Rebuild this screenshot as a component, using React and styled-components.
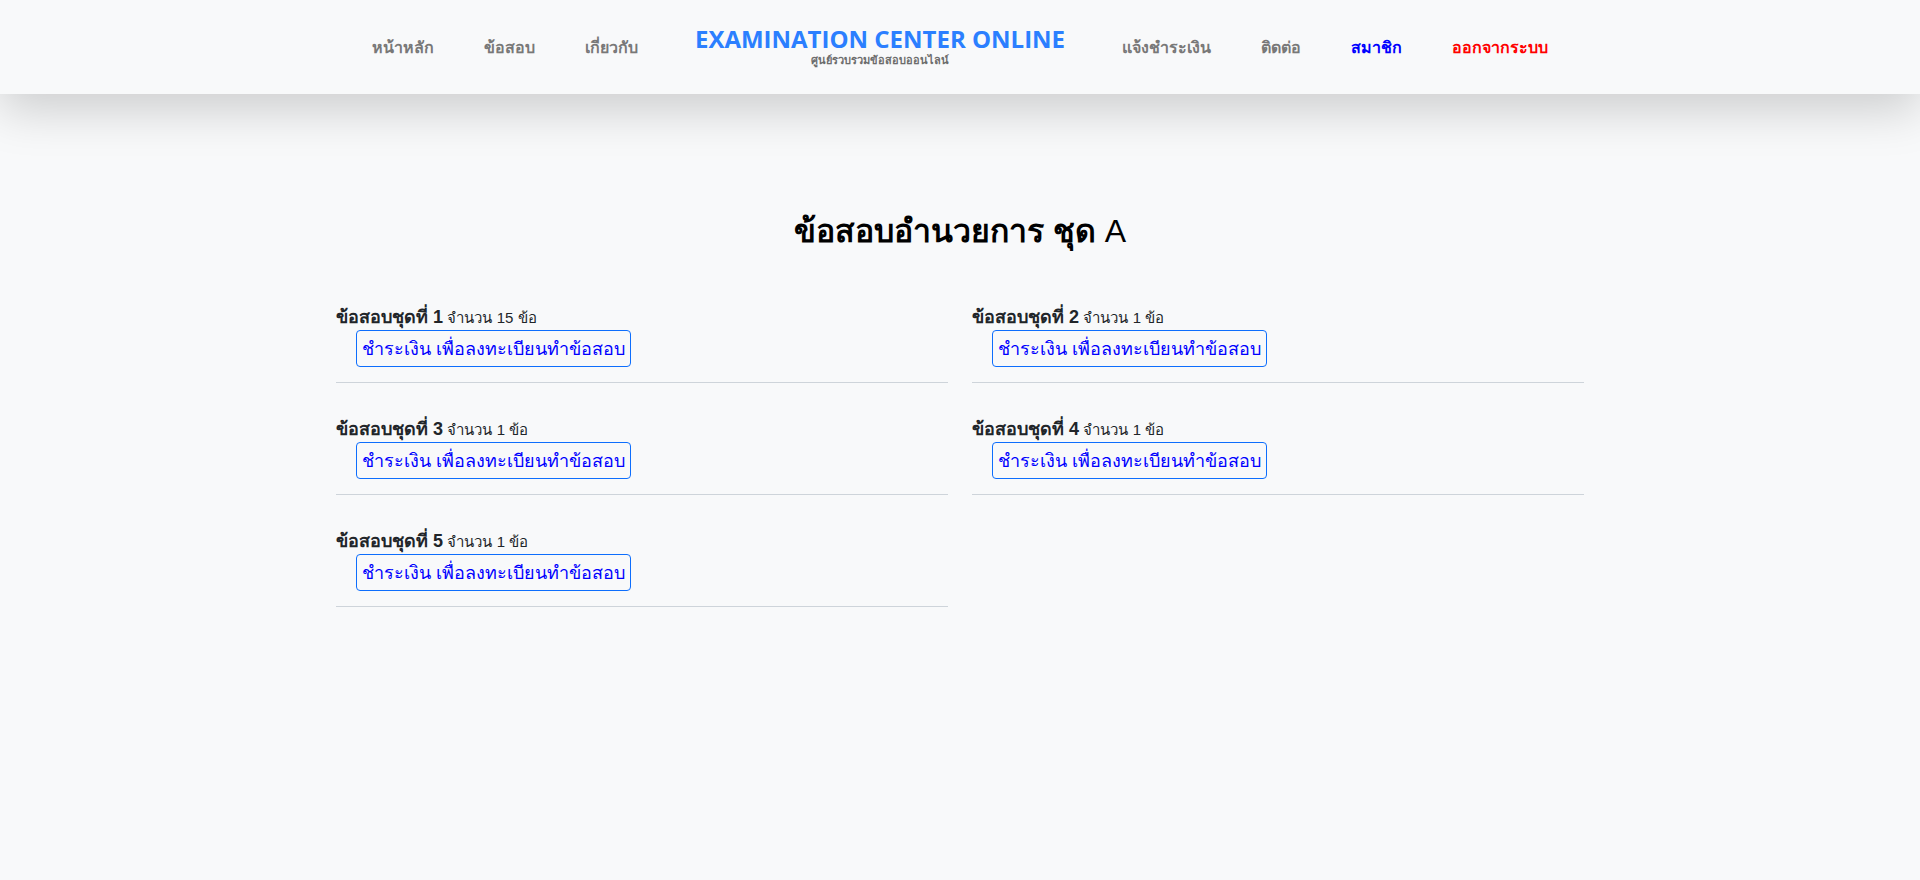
import React from "react";
import styled, { createGlobalStyle } from "styled-components";

const GlobalStyle = createGlobalStyle`
  html, body {
    margin: 0;
    padding: 0;
    background: #f8f9fa;
    font-family: "Liberation Sans", Arial, sans-serif;
    color: #212529;
  }
  * {
    box-sizing: border-box;
  }
`;

const StyledHeader = styled.header`
  height: 94px;
  background: #f8f9fa;
  box-shadow: 0 1rem 3rem rgba(0, 0, 0, 0.175);
  display: flex;
  justify-content: center;
  align-items: center;
  position: relative;
  z-index: 1;
`;

const StyledNavItem = styled.a`
  padding: 0 25px;
  font-family: "Open Sans", sans-serif;
  font-size: 16px;
  font-weight: 700;
  color: #787878;
  color: ${(props) => props.$color || "#787878"};
  text-decoration: none;
  cursor: pointer;
`;

const StyledBrand = styled.div`
  display: flex;
  flex-direction: column;
  align-items: center;
  margin: 0 32px 3px;
`;

const StyledBrandTitle = styled.span`
  font-family: "Open Sans", sans-serif;
  font-size: 24px;
  font-weight: 700;
  line-height: 28px;
  color: #2b7fff;
`;

const StyledBrandSubtitle = styled.span`
  font-family: "Open Sans", sans-serif;
  font-size: 11px;
  font-weight: 700;
  line-height: 14px;
  color: #6c6c6c;
`;

const StyledMain = styled.main`
  width: 1248px;
  margin: 0 auto;
  padding-top: 118px;
`;

const StyledPageTitle = styled.h2`
  margin: 0 0 55px;
  text-align: center;
  font-size: 32px;
  font-weight: 700;
  line-height: 38px;
  color: #000;
`;

const StyledTitleSuffix = styled.span`
  font-weight: 400;
`;

const StyledGrid = styled.div`
  display: grid;
  grid-template-columns: 1fr 1fr;
  column-gap: 24px;
`;

const StyledExamItem = styled.div`
  padding-bottom: 15px;
  margin-bottom: 34px;
  border-bottom: 1px solid #ced4da;
`;

const StyledExamHeading = styled.div`
  line-height: 24px;
  color: #212529;
`;

const StyledExamName = styled.b`
  font-size: 18px;
  font-weight: 700;
`;

const StyledExamCount = styled.span`
  font-size: 15px;
`;

const StyledPayButton = styled.button`
  margin-left: 20px;
  height: 37px;
  padding: 0 5px;
  background: transparent;
  border: 1px solid #0d6efd;
  border-radius: 4px;
  font-family: "Liberation Sans", Arial, sans-serif;
  font-size: 18px;
  color: #0000ff;
  cursor: pointer;
`;

const navLeft = ["หน้าหลัก", "ข้อสอบ", "เกี่ยวกับ"];

const exams = [
  { no: 1, count: 15 },
  { no: 2, count: 1 },
  { no: 3, count: 1 },
  { no: 4, count: 1 },
  { no: 5, count: 1 },
];

const App = () => {
  return (
    <>
      <GlobalStyle />
      <StyledHeader>
        {navLeft.map((item) => (
          <StyledNavItem key={item}>{item}</StyledNavItem>
        ))}
        <StyledBrand>
          <StyledBrandTitle>EXAMINATION CENTER ONLINE</StyledBrandTitle>
          <StyledBrandSubtitle>ศูนย์รวบรวมข้อสอบออนไลน์</StyledBrandSubtitle>
        </StyledBrand>
        <StyledNavItem>แจ้งชำระเงิน</StyledNavItem>
        <StyledNavItem>ติดต่อ</StyledNavItem>
        <StyledNavItem $color="#0000ff">สมาชิก</StyledNavItem>
        <StyledNavItem $color="#ff0000">ออกจากระบบ</StyledNavItem>
      </StyledHeader>

      <StyledMain>
        <StyledPageTitle>
          ข้อสอบอำนวยการ ชุด <StyledTitleSuffix>A</StyledTitleSuffix>
        </StyledPageTitle>
        <StyledGrid>
          {exams.map((exam) => (
            <StyledExamItem key={exam.no}>
              <StyledExamHeading>
                <StyledExamName>ข้อสอบชุดที่ {exam.no}</StyledExamName>{" "}
                <StyledExamCount>จำนวน {exam.count} ข้อ</StyledExamCount>
              </StyledExamHeading>
              <StyledPayButton>ชำระเงิน เพื่อลงทะเบียนทำข้อสอบ</StyledPayButton>
            </StyledExamItem>
          ))}
        </StyledGrid>
      </StyledMain>
    </>
  );
};

export default App;
